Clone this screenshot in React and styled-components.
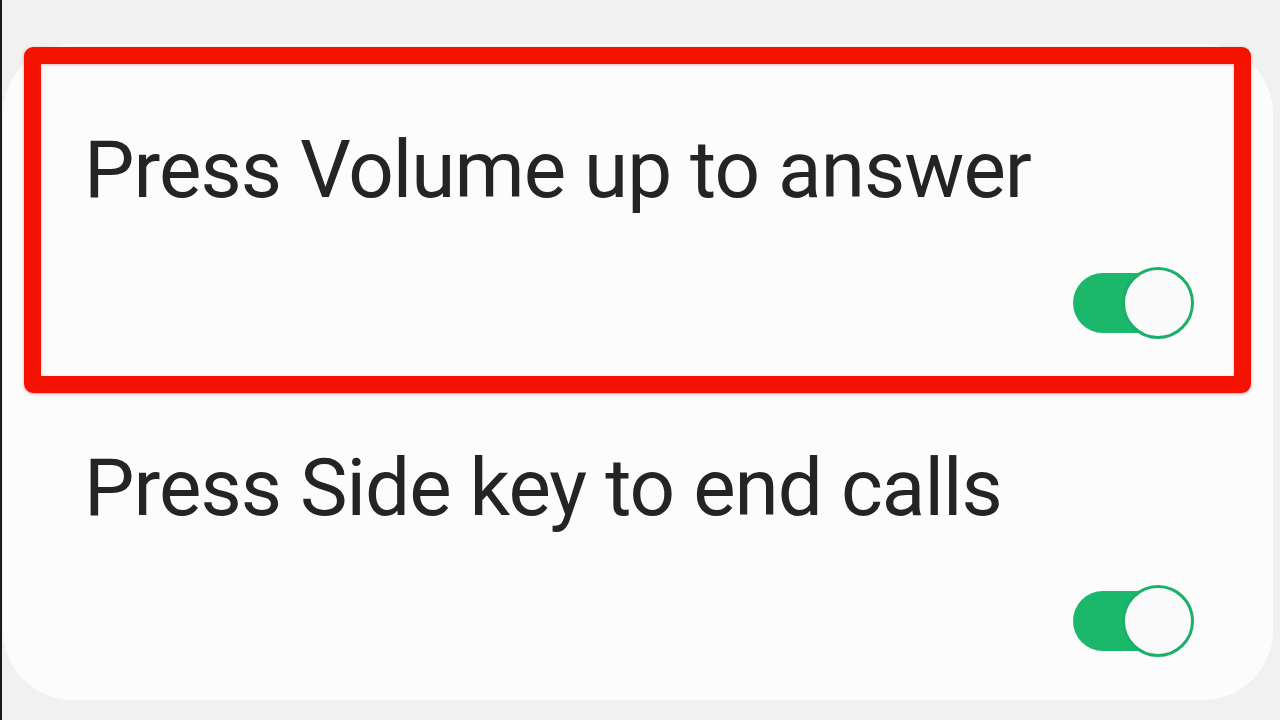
import React, { useState } from "react";
import styled, { createGlobalStyle } from "styled-components";

const Global = createGlobalStyle`
  html, body {
    margin: 0;
    padding: 0;
    background: #f1f1f1;
    font-family: Roboto, "Liberation Sans", sans-serif;
  }
`;

const Screen = styled.div`
  width: 1280px;
  height: 720px;
  overflow: hidden;
  box-sizing: border-box;
  border-left: 2px solid #1a1a1a;
  padding: 44px 7px 20px 1px;
  display: flex;
`;

const Card = styled.div`
  position: relative;
  flex: 1;
  background: #fcfcfc;
  border-radius: 70px;
  box-sizing: border-box;
  padding: 79px 79px 0 81px;
  display: flex;
  flex-direction: column;
  gap: 102px;
`;

const Highlight = styled.div`
  position: absolute;
  top: 3px;
  left: 21px;
  width: 1227px;
  height: 346px;
  box-sizing: border-box;
  border: 17px solid #f41200;
  border-radius: 9px;
  box-shadow: 0 1px 3px rgba(120, 0, 0, 0.35), inset 0 1px 3px rgba(120, 0, 0, 0.25);
  pointer-events: none;
`;

const Row = styled.div`
  display: flex;
  flex-direction: column;
  gap: 50px;
`;

const Title = styled.div`
  font-size: 80px;
  line-height: 94px;
  color: #242424;
  letter-spacing: -0.95px;
`;

const Switch = styled.button`
  align-self: flex-end;
  position: relative;
  width: 121px;
  height: 72px;
  padding: 0;
  border: 0;
  background: transparent;
  cursor: pointer;

  &::before {
    content: "";
    position: absolute;
    left: 0;
    top: 6px;
    width: 100px;
    height: 60px;
    border-radius: 30px;
    background: ${(p) => (p.$on ? "#1bb86b" : "#b8b8b8")};
  }

  &::after {
    content: "";
    position: absolute;
    top: 0;
    left: ${(p) => (p.$on ? "49px" : "0")};
    width: 72px;
    height: 72px;
    box-sizing: border-box;
    border-radius: 50%;
    background: #fafafa;
    border: 3px solid ${(p) => (p.$on ? "#1bb06a" : "#b8b8b8")};
  }
`;

const settings = [
  { id: "volume", label: "Press Volume up to answer" },
  { id: "side", label: "Press Side key to end calls" },
];

function App() {
  const [on, setOn] = useState({ volume: true, side: true });

  return (
    <>
      <Global />
      <Screen>
        <Card>
          <Highlight />
          {settings.map((s) => (
            <Row key={s.id}>
              <Title>{s.label}</Title>
              <Switch
                type="button"
                $on={on[s.id]}
                onClick={() => setOn({ ...on, [s.id]: !on[s.id] })}
              />
            </Row>
          ))}
        </Card>
      </Screen>
    </>
  );
}

export default App;
